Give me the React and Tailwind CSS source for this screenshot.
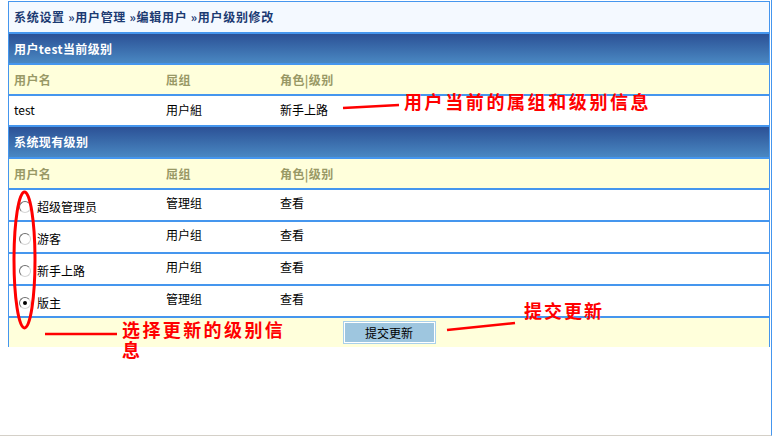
const font = { fontFamily: '"Noto Sans CJK SC", "DejaVu Sans", sans-serif' };

const Radio = ({ checked }) => (
  <span className="ml-[5px] mr-[6px] flex items-center justify-center w-[12px] h-[12px] min-w-[12px] rounded-full border border-t-[#6f6f6f] border-l-[#6f6f6f] border-r-[#d6d6d6] border-b-[#d6d6d6] bg-white">
    {checked && <span className="w-[4px] h-[4px] rounded-full bg-black" />}
  </span>
);

const Row = ({ cells, className = "", h = "h-[32px]" }) => (
  <div className={`flex items-center border-t-2 border-[#4596ee] ${h} ${className}`}>
    <div className="w-[157px] pl-[5px] flex items-center">{cells[0]}</div>
    <div className="w-[114px]">{cells[1]}</div>
    <div className="flex-1">{cells[2]}</div>
  </div>
);

const Section = ({ title, h = "h-[31px]" }) => (
  <div
    className={`flex items-center border-t-2 border-[#4596ee] ${h} pl-[5px] bg-gradient-to-b from-[#2c5196] to-[#4a88c2] text-white font-bold tracking-[0.4px]`}
  >
    {title}
  </div>
);

const HeadRow = () => (
  <Row
    h="h-[31px]"
    className="bg-[#ffffdb] text-[#999966] font-bold tracking-[0.4px]"
    cells={["用户名", "屈组", "角色|级别"]}
  />
);

export default function App() {
  const levels = [
    { name: "超级管理员", group: "管理组", checked: false },
    { name: "游客", group: "用户组", checked: false },
    { name: "新手上路", group: "用户组", checked: false },
    { name: "版主", group: "管理组", checked: true },
  ];

  return (
    <div className="relative w-[777px] h-[436px] bg-white text-[12px] text-black overflow-hidden" style={font}>
      <div className="w-[772px] h-[436px] border-r border-b border-r-[#4596ee] border-b-[#d4d0c8] pt-[1px]">
        <div className="ml-[8px] w-[762px] border-t border-l border-r border-[#4596ee]">
          {/* breadcrumb */}
          <div className="h-[30px] flex items-center pl-[5px] bg-[#f4f9ff] text-[#1b3a72] font-bold tracking-[0.7px]">
            系统设置 »用户管理 »编辑用户 »用户级别修改
          </div>

          <Section title="用户test当前级别" />
          <HeadRow />
          <Row h="h-[31px]" className="bg-white pb-[2px]" cells={["test", "用户組", "新手上路"]} />

          <Section title="系统现有级别" h="h-[32px]" />
          <HeadRow />
          {levels.map((l) => (
            <Row
              key={l.name}
              className="bg-white pb-[5px]"
              cells={[
                <span className="flex items-center pt-[9px]">
                  <Radio checked={l.checked} />
                  {l.name}
                </span>,
                l.group,
                "查看",
              ]}
            />
          ))}

          {/* footer */}
          <div className="h-[31px] border-t-2 border-[#4596ee] bg-[#ffffdb] flex items-start justify-center pt-[3px]">
            <button className="w-[93px] h-[23px] border border-[#a9d0ea] bg-white p-[1px]">
              <span className="flex items-center justify-center w-full h-full bg-[#9ec6df] text-black">
                提交更新
              </span>
            </button>
          </div>
        </div>
      </div>

      {/* annotations */}
      <svg className="absolute left-0 top-0 pointer-events-none" width="777" height="436">
        <ellipse cx="24.5" cy="260" rx="10.5" ry="68" fill="none" stroke="#ff0000" strokeWidth="3" />
        <line x1="343" y1="108" x2="399" y2="105" stroke="#ff0000" strokeWidth="2.5" />
        <line x1="45" y1="334" x2="117" y2="334" stroke="#ff0000" strokeWidth="2.5" />
        <line x1="447" y1="330" x2="515" y2="323" stroke="#ff0000" strokeWidth="2.5" />
      </svg>
      <div className="absolute left-[404px] top-[91px] text-[#ff0000] font-bold text-[18px] tracking-[2.6px] leading-[20px]">
        用户当前的属组和级别信息
      </div>
      <div className="absolute left-[122px] top-[319px] w-[170px] text-[#ff0000] font-bold text-[18px] tracking-[2.4px] leading-[20px]">
        选择更新的级别信息
      </div>
      <div className="absolute left-[524px] top-[300px] text-[#ff0000] font-bold text-[18px] tracking-[2px] leading-[20px]">
        提交更新
      </div>
    </div>
  );
}
